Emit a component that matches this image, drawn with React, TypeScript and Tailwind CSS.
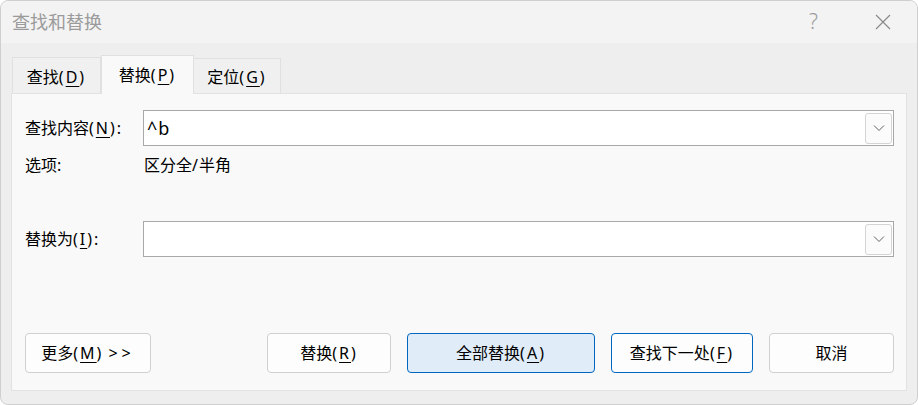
import React from 'react';

// mnemonic like "(N)" — Latin glyphs in the reference are set wider
function Mn({ k, after = '' }: { k: string; after?: string }) {
  return (
    <span className="tracking-[2px]">
      (<span className="underline decoration-1 underline-offset-[3px]">{k}</span>){after}
    </span>
  );
}

function Combo({ value }: { value?: string }) {
  return (
    <div className="flex items-center flex-1 h-[36px] bg-white border border-[#a8a8a8] pl-[3px] pr-[1px]">
      <div className="flex-1 text-[18px] text-black leading-none tracking-[1px]">{value}</div>
      <div className="w-[27px] h-[31px] rounded-[3px] border border-[#d4d4d4] bg-[#fbfbfb] flex items-center justify-center">
        <svg width="12" height="8" viewBox="0 0 12 8" fill="none">
          <path d="M1 1.5 L6 6.5 L11 1.5" stroke="#606060" strokeWidth="1" />
        </svg>
      </div>
    </div>
  );
}

function Btn({ children, w, kind }: { children: React.ReactNode; w: string; kind?: 'accent' | 'default' }) {
  const cls =
    kind === 'accent'
      ? 'bg-[#e0ecf8] border-[#0067c0]'
      : kind === 'default'
      ? 'bg-[#fdfdfd] border-[#0067c0]'
      : 'bg-[#fdfdfd] border-[#d0d0d0]';
  return (
    <div className={`${w} h-[40px] rounded-[4px] border flex items-center justify-center text-[16px] text-black ${cls}`}>
      {children}
    </div>
  );
}

export default function App() {
  return (
    <div className="w-[918px] h-[405px] bg-white font-['Noto_Sans','Noto_Sans_CJK_SC',sans-serif]">
      <div className="w-full h-full rounded-[8px] border border-[#cfcfcf] bg-[#eeeeee] overflow-hidden flex flex-col">
        {/* title bar */}
        <div className="h-[42px] bg-[#f3f3f3] flex items-center pl-[11px] shrink-0">
          <span className="text-[18px] text-[#9b9b9b]">查找和替换</span>
          <span className="ml-auto text-[21px] font-light text-[#9b9b9b] mr-[57px]">?</span>
          <svg width="16" height="16" viewBox="0 0 16 16" className="mr-[26px]">
            <path d="M1 1 L15 15 M15 1 L1 15" stroke="#8a8a8a" strokeWidth="1.2" />
          </svg>
        </div>

        <div className="flex-1 flex flex-col px-[10px] pt-[12px] pb-[13px]">
          {/* tabs */}
          <div className="flex items-end h-[39px] pl-[1px] -mb-px">
            <div className="w-[89px] h-[37px] border border-[#e0e0e0] border-b-0 bg-[#f0f0f0] flex items-center justify-center text-[16px] text-black pt-px">
              查找<Mn k="D" />
            </div>
            <div className="w-[93px] h-[39px] border border-[#e0e0e0] border-b-0 bg-[#f9f9f9] flex items-center justify-center text-[16px] text-black relative z-10">
              替换<Mn k="P" />
            </div>
            <div className="w-[87px] h-[36px] border border-[#e0e0e0] border-b-0 border-l-0 bg-[#f0f0f0] flex items-center justify-center text-[16px] text-black">
              定位<Mn k="G" />
            </div>
          </div>

          {/* panel */}
          <div className="flex-1 border border-[#e2e2e2] bg-[#f9f9f9] flex flex-col pl-[13px] pr-[12px] pt-[16px] pb-[17px]">
            <div className="flex items-center">
              <div className="w-[118px] text-[16px] text-black">
                查找内容<Mn k="N" after=":" />
              </div>
              <Combo value="^b" />
            </div>
            <div className="flex items-center h-[38px]">
              <div className="w-[119px] text-[16px] text-black">
                选项<span className="tracking-[2px]">:</span>
              </div>
              <div className="text-[16px] text-black">
                区分全<span className="tracking-[1px]">/</span>半角
              </div>
            </div>
            <div className="flex items-center mt-[37px]">
              <div className="w-[118px] text-[16px] text-black">
                替换为<Mn k="I" after=":" />
              </div>
              <Combo />
            </div>

            <div className="mt-auto flex items-center justify-between">
              <Btn w="w-[126px]">
                更多<Mn k="M" />
                <span className="ml-[5px] tracking-[4px]">&gt;&gt;</span>
              </Btn>
              <div className="flex gap-[16px]">
                <Btn w="w-[124px]">
                  替换<Mn k="R" />
                </Btn>
                <Btn w="w-[188px]" kind="accent">
                  全部替换<Mn k="A" />
                </Btn>
                <Btn w="w-[142px]" kind="default">
                  查找下一处<Mn k="F" />
                </Btn>
                <Btn w="w-[125px]">取消</Btn>
              </div>
            </div>
          </div>
        </div>
      </div>
    </div>
  );
}
